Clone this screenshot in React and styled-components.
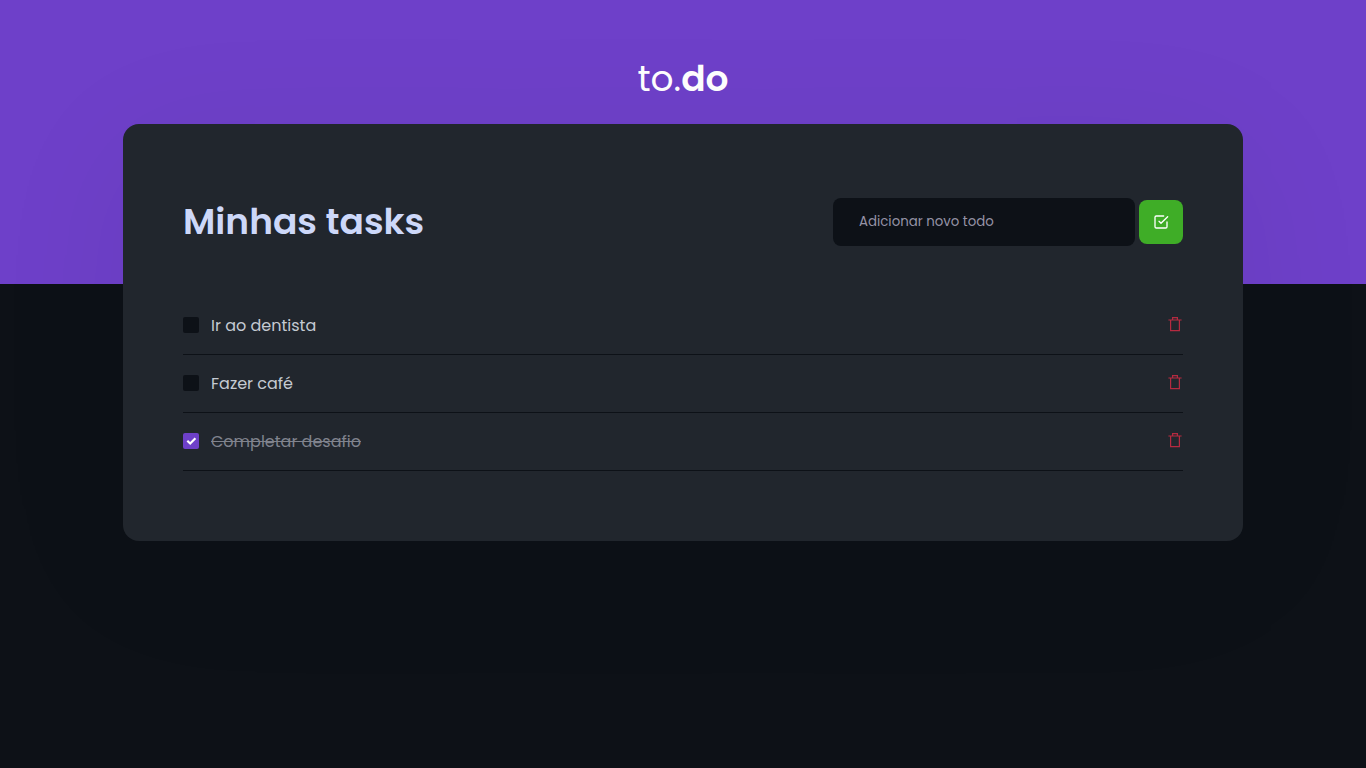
import React, { useState } from 'react';
import styled, { createGlobalStyle } from 'styled-components';
import { FiCheckSquare } from 'react-icons/fi';

const GlobalStyle = createGlobalStyle`
  * { box-sizing: border-box; margin: 0; padding: 0; }
  body { min-height: 100vh; background: #0d1117; }
  body, input, button { font-family: Poppins, Inter, sans-serif; }
  button { cursor: pointer; border: 0; background: none; }
`;

const Header = styled.header`
  display: flex;
  justify-content: center;
  height: 284px;
  padding-top: 49px;
  background: #6e40c9;
`;

const Logo = styled.div`
  height: 60px;
  line-height: 60px;
  font-size: 36px;
  color: #fff;

  strong { font-weight: 600; }
`;

const Panel = styled.main`
  position: relative;
  width: calc(100% - 40px);
  max-width: 1120px;
  margin: -160px auto 0;
  padding: 70px 60px;
  border-radius: 16px;
  background: #21262d;
  box-shadow: 0 24px 150px rgba(0, 0, 0, 0.06);
`;

const PanelHeader = styled.div`
  display: flex;
  align-items: center;
  justify-content: space-between;
  height: 56px;
  margin-bottom: 47px;
`;

const Title = styled.h1`
  font-size: 36px;
  line-height: 56px;
  font-weight: 600;
  color: #cdd8f9;
`;

const NewTask = styled.form`
  display: flex;
  align-items: center;
  gap: 4px;
`;

const TaskInput = styled.input`
  width: 302px;
  height: 48px;
  padding: 0 26px;
  border: 0;
  border-radius: 8px;
  background: #0d1117;
  color: #cdd9e5;

  &::placeholder { color: #9593a6; opacity: 1; }
`;

const AddButton = styled.button`
  display: flex;
  align-items: center;
  justify-content: center;
  width: 44px;
  height: 44px;
  border-radius: 8px;
  background: #3fad27;
  color: #fff;
`;

const TaskList = styled.ul`
  list-style: none;
`;

const Task = styled.li`
  display: flex;
  align-items: center;
  justify-content: space-between;
  padding: 15px 0 16px;
  border-bottom: 1px solid #0d1117;
`;

const TaskLabel = styled.label`
  display: flex;
  align-items: center;
  gap: 12px;
  font-size: 16px;
  line-height: 24px;
  color: ${({ $done }) => ($done ? '#80838d' : '#c4cad2')};
  text-decoration: ${({ $done }) => ($done ? 'line-through' : 'none')};
  cursor: pointer;
`;

const TaskTitle = styled.span`
  padding-top: 2px;
`;

const CheckSlot = styled.span`
  display: grid;
  width: 16px;
  height: 16px;

  > * { grid-area: 1 / 1; }
`;

const Checkbox = styled.input`
  appearance: none;
  width: 16px;
  height: 16px;
  border-radius: 2px;
  background: #0d1117;

  &:checked { background: #6e40c9; }
`;

const Tick = styled.svg`
  z-index: 1;
  pointer-events: none;
`;

const RemoveButton = styled.button`
  display: flex;
  padding-bottom: 2px;
  color: #b52a40;
`;

function TrashIcon() {
  return (
    <svg width="16" height="16" viewBox="0 0 16 16" fill="none" stroke="currentColor" strokeWidth="1.2" aria-hidden="true">
      <path d="M1.4 4h13.2M3.6 4v10.6h8.8V4M5.6 4V1.6h4.8V4" />
    </svg>
  );
}

const initialTasks = [
  { id: 1, title: 'Ir ao dentista', done: false },
  { id: 2, title: 'Fazer café', done: false },
  { id: 3, title: 'Completar desafio', done: true },
];

export default function App() {
  const [tasks, setTasks] = useState(initialTasks);
  const [title, setTitle] = useState('');

  function addTask(event) {
    event.preventDefault();
    if (!title.trim()) return;
    setTasks([...tasks, { id: Date.now(), title, done: false }]);
    setTitle('');
  }

  function toggleTask(id) {
    setTasks(tasks.map((task) => (task.id === id ? { ...task, done: !task.done } : task)));
  }

  function removeTask(id) {
    setTasks(tasks.filter((task) => task.id !== id));
  }

  return (
    <>
      <GlobalStyle />
      <Header>
        <Logo>to.<strong>do</strong></Logo>
      </Header>
      <Panel>
        <PanelHeader>
          <Title>Minhas tasks</Title>
          <NewTask onSubmit={addTask}>
            <TaskInput
              type="text"
              aria-label="Adicionar novo todo"
              placeholder="Adicionar novo todo"
              value={title}
              onChange={(event) => setTitle(event.target.value)}
            />
            <AddButton type="submit" aria-label="Adicionar">
              <FiCheckSquare size={16} />
            </AddButton>
          </NewTask>
        </PanelHeader>
        <TaskList>
          {tasks.map((task) => (
            <Task key={task.id}>
              <TaskLabel $done={task.done}>
                <CheckSlot>
                  <Checkbox type="checkbox" checked={task.done} onChange={() => toggleTask(task.id)} />
                  {task.done && (
                    <Tick width="16" height="16" viewBox="0 0 16 16" fill="none" stroke="#fff" strokeWidth="2.2">
                      <path d="M4.3 7.7 7.2 10.5 12.4 5.3" />
                    </Tick>
                  )}
                </CheckSlot>
                <TaskTitle>{task.title}</TaskTitle>
              </TaskLabel>
              <RemoveButton type="button" aria-label={`Remover ${task.title}`} onClick={() => removeTask(task.id)}>
                <TrashIcon />
              </RemoveButton>
            </Task>
          ))}
        </TaskList>
      </Panel>
    </>
  );
}
